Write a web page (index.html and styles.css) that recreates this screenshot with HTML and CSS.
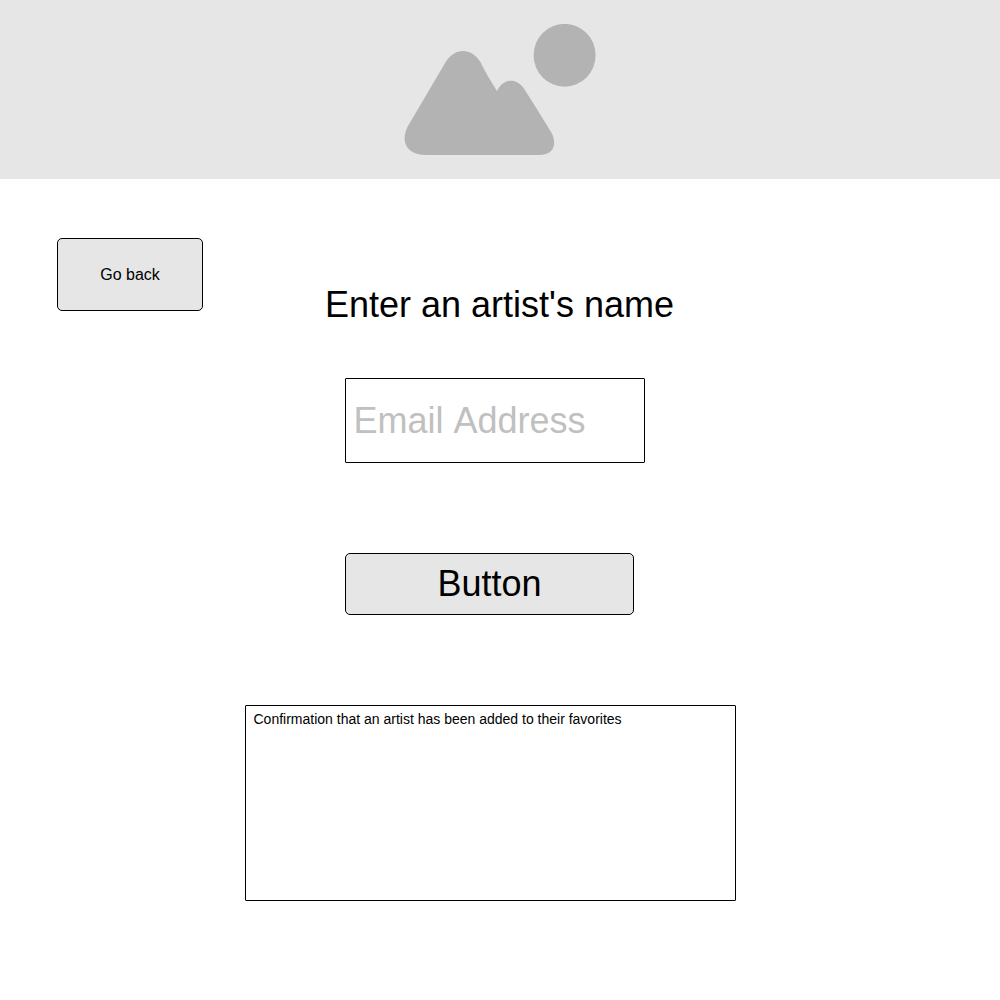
FILE: index.html
```html
<!DOCTYPE html>
<html lang="en">
<head>
<meta charset="utf-8">
<title>Add an artist</title>
<link rel="stylesheet" href="styles.css">
</head>
<body>
<header class="banner">
  <svg class="banner-image" width="192" height="132" viewBox="404 24 192 132" aria-hidden="true">
    <path d="M408 126 L445.4 62.500 C454.5 47.200 471.200 47.200 480.400 62 C485 71.500 491 81.500 496.900 91 C503.500 78 516.500 77.800 523.700 88.300 C533 102.500 542 117.500 551.400 132.500 C557.500 144.500 553.500 155 539.500 155 L427 155 C407 155 399.600 142.300 408 126 Z"/>
    <ellipse cx="564.6" cy="55.3" rx="31" ry="31.4"/>
  </svg>
</header>
<main class="page">
  <button class="button back" type="button">Go back</button>
  <form class="form">
    <label class="title" for="artist">Enter an artist's name</label>
    <input class="field" id="artist" type="text" placeholder="Email Address">
    <button class="button submit" type="button">Button</button>
    <output class="message">Confirmation that an artist has been added to their favorites</output>
  </form>
</main>
</body>
</html>
```
FILE: styles.css
```css
* {
  box-sizing: border-box;
}

body {
  margin: 0;
  background: #fff;
  color: #000;
  font-family: "Liberation Sans", Arial, sans-serif;
  font-kerning: none;
}

.banner {
  display: flex;
  justify-content: center;
  height: 179px;
  padding-top: 24px;
  background: #e6e6e6;
}

.banner-image {
  fill: #b3b3b3;
}

.page {
  display: flex;
  align-items: flex-start;
  gap: 42px;
  padding: 59px 57px 0;
}

.button {
  padding: 0;
  border: 1px solid #000;
  border-radius: 5px;
  background: #e6e6e6;
  color: #000;
  font-family: inherit;
}

.back {
  width: 146px;
  height: 73px;
  font-size: 16px;
}

.form {
  display: flex;
  flex-direction: column;
  align-items: flex-start;
  width: 491px;
  padding-top: 46px;
}

.title {
  margin-left: 80px;
  font-size: 36px;
  line-height: 41px;
  white-space: nowrap;
}

.field {
  width: 300px;
  height: 85px;
  margin: 53px 0 90px 100px;
  padding: 0 7.5px;
  border: 1px solid #000;
  border-radius: 1px;
  background: #fff;
  font-family: inherit;
  font-size: 36px;
  font-kerning: none;
}

.field::placeholder {
  color: #c0c0c0;
}

.submit {
  width: 289px;
  height: 62px;
  margin-left: 100px;
  font-size: 36px;
}

.message {
  width: 491px;
  height: 196px;
  margin-top: 90px;
  padding: 5px 7.5px;
  border: 1px solid #000;
  border-radius: 1px;
  background: #fff;
  font-size: 14px;
  line-height: 16px;
}
```
